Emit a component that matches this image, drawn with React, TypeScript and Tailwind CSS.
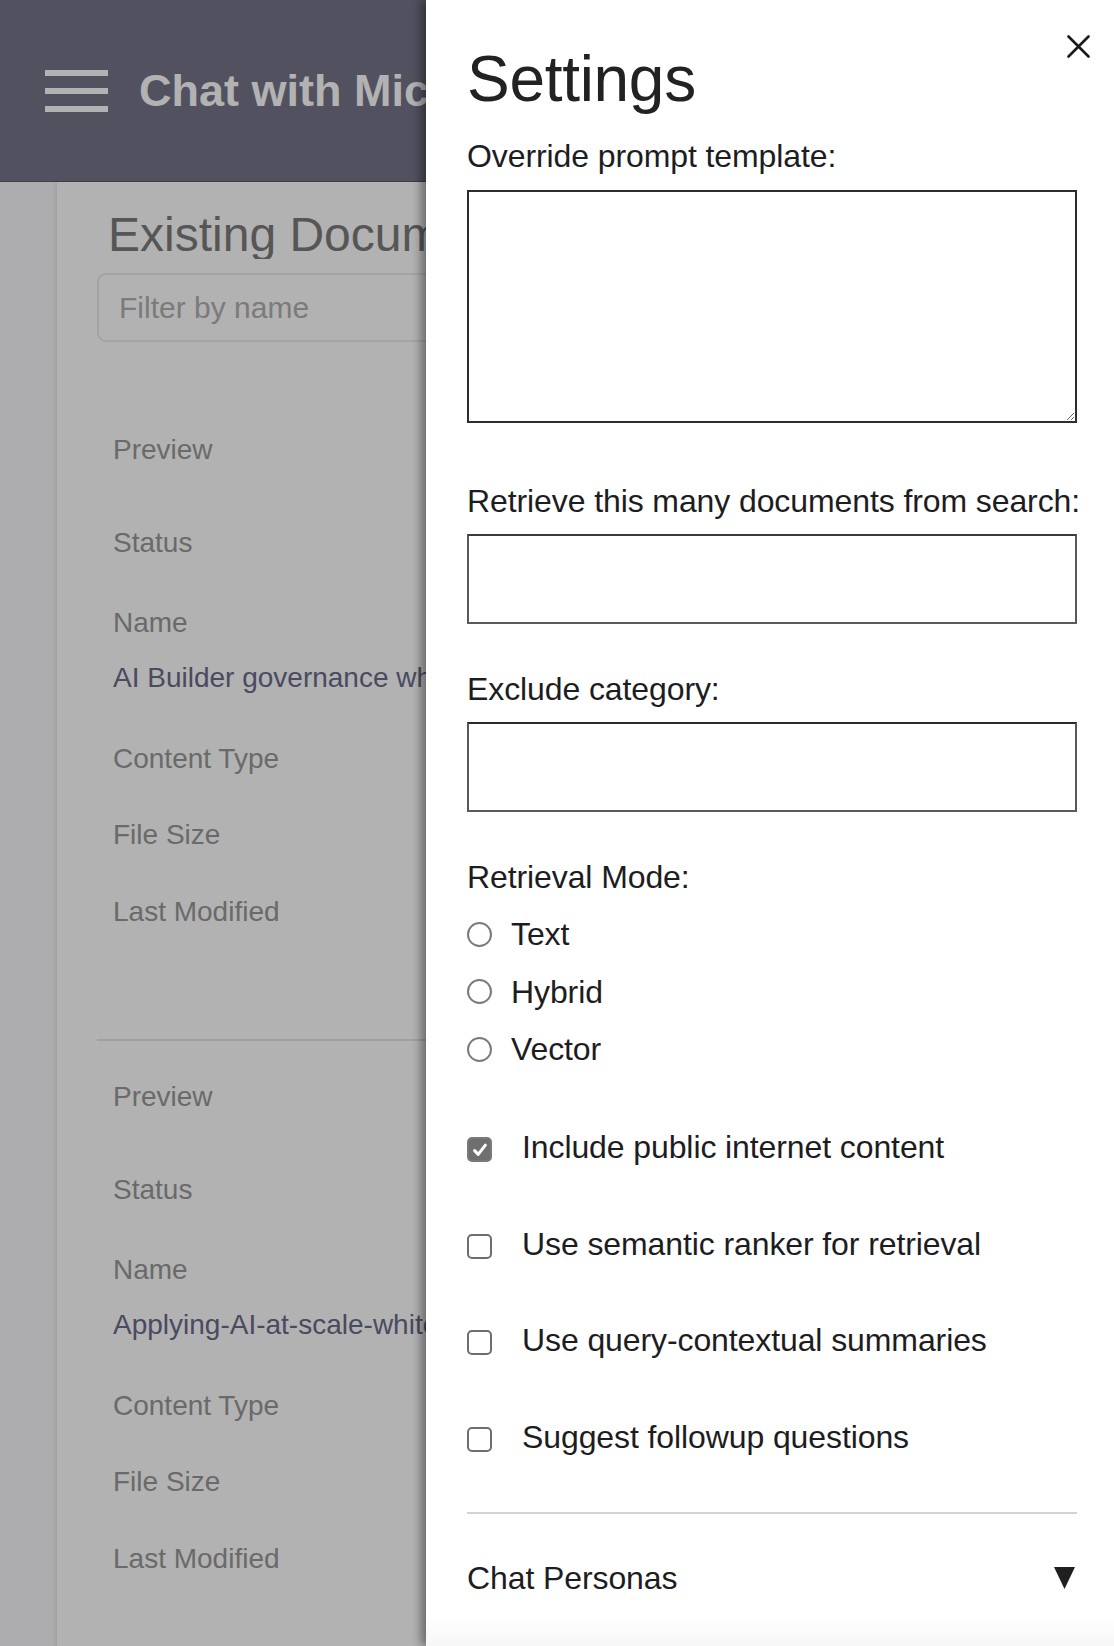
import React from "react";

function Field({ label, className = "" }: { label: string; className?: string }) {
  return (
    <div className={`text-[28px] leading-[32px] text-[#989898] ${className}`}>{label}</div>
  );
}

function DocBlock({ name }: { name: string }) {
  return (
    <div className="flex flex-col px-[16px] pt-[40px] pb-[111px] border-b-2 border-[#e6e6e6]">
      <Field label="Preview" />
      <Field label="Status" className="mt-[61px]" />
      <Field label="Name" className="mt-[48px]" />
      <div className="mt-[23px] text-[28px] leading-[32px] text-[#6a6b8a] whitespace-nowrap">{name}</div>
      <Field label="Content Type" className="mt-[49px]" />
      <Field label="File Size" className="mt-[44px]" />
      <Field label="Last Modified" className="mt-[45px]" />
    </div>
  );
}

function Radio({ label }: { label: string }) {
  return (
    <div className="flex h-[36px] items-center gap-[19px]">
      <span className="h-[25px] w-[25px] rounded-full border-2 border-[#7b7b7b] bg-white" />
      <span className="text-[32px] leading-[36px] tracking-[-0.1px] text-[#1d1d1f]">{label}</span>
    </div>
  );
}

function Check({ label, checked = false }: { label: string; checked?: boolean }) {
  return (
    <div className="flex h-[36px] items-center gap-[30px]">
      {checked ? (
        <span className="mt-[5px] flex h-[25px] w-[25px] items-center justify-center rounded-[5px] border-2 border-[#7a7a7a] bg-[#6f6f6f]">
          <svg width="16" height="16" viewBox="0 0 16 16">
            <path d="M2.6 8.6 L6.2 12.4 L13.4 3.2" fill="none" stroke="white" strokeWidth="3" strokeLinecap="round" strokeLinejoin="round" />
          </svg>
        </span>
      ) : (
        <span className="mt-[5px] h-[25px] w-[25px] rounded-[5px] border-2 border-[#6e6e6e] bg-white" />
      )}
      <span className="text-[32px] leading-[36px] tracking-[-0.1px] text-[#1d1d1f]">{label}</span>
    </div>
  );
}

export default function App() {
  return (
    <div className="relative h-[1646px] w-[1114px] overflow-hidden bg-white font-['Liberation_Sans',Arial,sans-serif]">
      {/* Background page (visible part only, the rest sits under the panel) */}
      <div className="flex h-full w-[426px] flex-col overflow-hidden">
        <header className="flex h-[182px] w-[1114px] shrink-0 items-center gap-[31px] border-b border-[#5c5b6e] bg-[#757489] pl-[45px]">
          <div className="flex h-[42px] w-[63px] shrink-0 flex-col justify-between">
            <span className="block h-[6px] w-full bg-white" />
            <span className="block h-[6px] w-full bg-white" />
            <span className="block h-[6px] w-full bg-white" />
          </div>
          <h1 className="w-[287px] overflow-hidden whitespace-nowrap text-[45px] font-bold leading-[45px] text-white">
            Chat with Microsoft Documents
          </h1>
        </header>
        <div className="flex flex-1">
          <div className="w-[57px] shrink-0 bg-[#f8f8fb]" />
          <main className="w-[1057px] shrink-0 bg-white pl-[40px] pt-[29px] shadow-[-2px_0_4px_rgba(0,0,0,0.08)]">
            <h2 className="ml-[11px] w-[318px] overflow-hidden whitespace-nowrap text-[48px] leading-[48px] text-[#7c7c7c]">
              Existing Documents
            </h2>
            <div className="mt-[14px] flex h-[69px] w-[900px] items-center rounded-[9px] border-2 border-[#ebebeb] pl-[20px] text-[30px] text-[#b0b0b0]">
              Filter by name
            </div>
            <div className="mt-[52px] w-[900px]">
              <DocBlock name="AI Builder governance whitepaper.pdf" />
              <DocBlock name="Applying-AI-at-scale-whitepaper.pdf" />
            </div>
          </main>
        </div>
      </div>

      {/* Dim overlay */}
      <div className="absolute inset-0 bg-black/30" />

      {/* Settings panel */}
      <aside className="absolute right-0 top-0 h-full w-[688px] bg-white pl-[41px] pr-[37px] pt-[47px] text-[#1d1d1f] shadow-[-5px_0_9px_rgba(0,0,0,0.4)]">
        <button className="absolute right-[24px] top-[35px]" aria-label="Close">
          <svg width="23" height="23" viewBox="0 0 23 23">
            <path d="M1.5 1.5 L21.5 21.5 M21.5 1.5 L1.5 21.5" stroke="#1a1a1a" strokeWidth="2.6" strokeLinecap="round" />
          </svg>
        </button>
        <h1 className="text-[64px] leading-[64px] tracking-[-0.3px] text-[#222]">Settings</h1>

        <div className="mt-[27px] text-[32px] leading-[36px] tracking-[-0.1px]">Override prompt template:</div>
        <textarea className="mt-[16px] block h-[233px] w-full border-2 border-[#2e2e2e] bg-white outline-none" />

        <div className="mt-[60px] whitespace-nowrap text-[32px] leading-[36px] tracking-[-0.1px]">
          Retrieve this many documents from search:
        </div>
        <div className="mt-[15px] h-[90px] w-full border-2 border-[#5a5a5a] border-t-[#3a3a3a]" />

        <div className="mt-[47px] text-[32px] leading-[36px] tracking-[-0.1px]">Exclude category:</div>
        <div className="mt-[15px] h-[90px] w-full border-2 border-[#5a5a5a] border-t-[#2a2a2a]" />

        <div className="mt-[47px] text-[32px] leading-[36px] tracking-[-0.1px]">Retrieval Mode:</div>
        <div className="mt-[21px] flex flex-col gap-[21.5px]">
          <Radio label="Text" />
          <Radio label="Hybrid" />
          <Radio label="Vector" />
        </div>

        <div className="mt-[62px] flex flex-col gap-[60.7px]">
          <Check label="Include public internet content" checked />
          <Check label="Use semantic ranker for retrieval" />
          <Check label="Use query-contextual summaries" />
          <Check label="Suggest followup questions" />
        </div>

        <div className="mt-[57px] border-t-2 border-[#d2d2d2]" />

        <div className="mt-[46px] flex h-[36px] items-center justify-between">
          <span className="text-[32px] leading-[36px] tracking-[-0.1px]">Chat Personas</span>
          <svg width="21" height="22" viewBox="0 0 21 22" className="mr-[2px]">
            <polygon points="0,0 21,0 10.5,22" fill="#1f1f1f" />
          </svg>
        </div>

        <div className="absolute bottom-0 left-0 right-0 h-[30px] bg-gradient-to-b from-white to-[#f7f7f7]" />
      </aside>
    </div>
  );
}
